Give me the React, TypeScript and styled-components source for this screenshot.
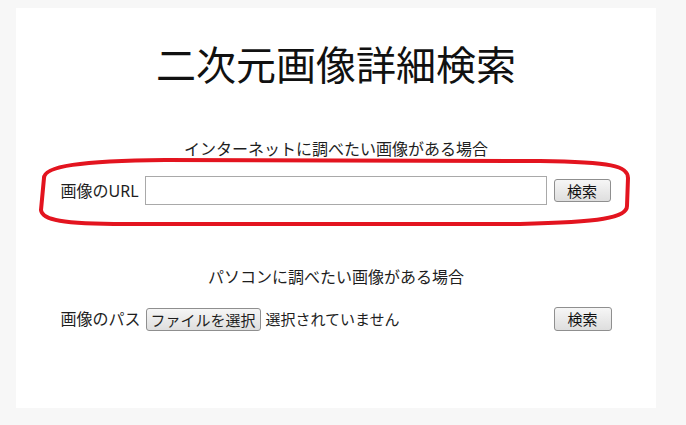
import styled, { createGlobalStyle } from "styled-components";

const GlobalStyle = createGlobalStyle`
  body {
    margin: 0;
    background: #f7f7f7;
    font-family: "Noto Sans", "Noto Sans CJK JP", sans-serif;
    color: #1e1e1e;
  }
`;

const PageWrapper = styled.div`
  width: 686px;
  height: 425px;
  padding: 8px 30px 17px 16px;
  box-sizing: border-box;
`;

const Panel = styled.main`
  position: relative;
  width: 640px;
  height: 400px;
  background: #fff;
  display: flex;
  flex-direction: column;
  align-items: center;
`;

const Title = styled.h1`
  margin: 31px 0 0;
  font-size: 40px;
  line-height: 48px;
  font-weight: 400;
  color: #111;
  font-family: "Noto Sans CJK JP", sans-serif;
`;

const Lead = styled.p<{ $top: number }>`
  margin: ${(p) => p.$top}px 0 0;
  font-size: 16px;
  line-height: 24px;
  font-family: "Noto Sans CJK JP", sans-serif;
`;

const Row = styled.div<{ $top: number; $split?: boolean }>`
  margin-top: ${(p) => p.$top}px;
  width: 551px;
  display: flex;
  align-items: center;
  justify-content: ${(p) => (p.$split ? "space-between" : "flex-start")};
  gap: 6px;
`;

const Label = styled.span`
  font-size: 16px;
  line-height: 24px;
  white-space: nowrap;
`;

const UrlInput = styled.input`
  width: 402px;
  height: 29px;
  box-sizing: border-box;
  border: 1px solid #a9a9a9;
  padding: 2px 4px;
  font-size: 15px;
  outline: none;
`;

const Button = styled.button<{ $w: number; $h: number }>`
  width: ${(p) => p.$w}px;
  height: ${(p) => p.$h}px;
  margin-left: 1px;
  padding: 0;
  border: 1px solid #8f8f8f;
  border-radius: 3px;
  background: linear-gradient(#f6f6f6, #dedede);
  font-family: "Noto Sans CJK JP", sans-serif;
  font-size: 15px;
  line-height: 18px;
  color: #111;
  cursor: pointer;
`;

const FileGroup = styled.label`
  display: flex;
  align-items: center;
  gap: 5px;
`;

const HiddenFile = styled.input`
  display: none;
`;

const FileButton = styled.span`
  display: inline-flex;
  align-items: center;
  justify-content: center;
  width: 115px;
  height: 23px;
  box-sizing: border-box;
  border: 1px solid #8f8f8f;
  border-radius: 3px;
  background: linear-gradient(#f6f6f6, #dedede);
  font-family: "Noto Sans CJK JP", sans-serif;
  font-size: 15px;
  cursor: pointer;
`;

const FileStatus = styled.span`
  font-family: "Noto Sans CJK JP", sans-serif;
  font-size: 15px;
  line-height: 22px;
`;

const Mark = styled.svg`
  position: absolute;
  left: -16px;
  top: -8px;
  width: 686px;
  height: 425px;
  pointer-events: none;
`;

export default function App() {
  return (
    <PageWrapper>
      <GlobalStyle />
      <Panel>
        <Title>二次元画像詳細検索</Title>

        <Lead $top={49}>インターネットに調べたい画像がある場合</Lead>
        <Row $top={16}>
          <Label>画像のURL</Label>
          <UrlInput type="text" />
          <Button $w={57} $h={23}>検索</Button>
        </Row>

        <Lead $top={59}>パソコンに調べたい画像がある場合</Lead>
        <Row $top={19} $split>
          <FileGroup>
            <Label>画像のパス</Label>
            <HiddenFile type="file" />
            <FileButton>ファイルを選択</FileButton>
            <FileStatus>選択されていません</FileStatus>
          </FileGroup>
          <Button $w={58} $h={24}>検索</Button>
        </Row>

        <Mark viewBox="0 0 686 425">
          <path
            d="M44 178 C44 166 80 161 165 160 L540 161 C612 162 628 166 628 178 L627 206 C627 218 600 222 520 224 L125 224 C62 224 42 220 41 210 Z"
            fill="none"
            stroke="#e3141f"
            strokeWidth="4"
          />
        </Mark>
      </Panel>
    </PageWrapper>
  );
}
